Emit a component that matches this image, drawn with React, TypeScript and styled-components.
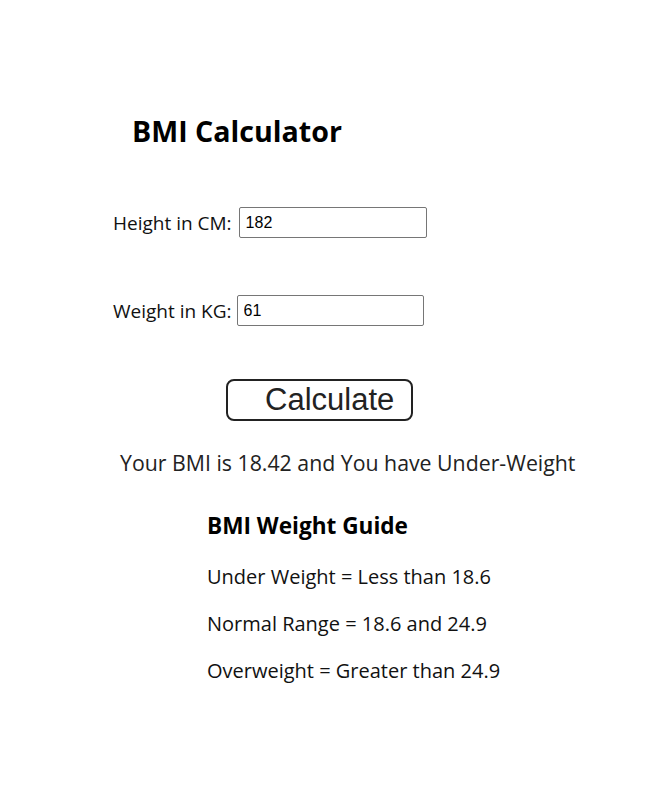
import React from "react";
import styled, { createGlobalStyle } from "styled-components";

const Global = createGlobalStyle`
  body { margin: 0; background: #fff; font-family: "Open Sans", "Noto Sans", sans-serif; color: #222; }
`;

const Page = styled.div`
  display: flex;
  flex-direction: column;
  align-items: flex-start;
  padding-top: 112px;
`;

const Title = styled.h1`
  margin: 0 0 0 132px;
  font-size: 28.6px;
  line-height: 38px;
  font-weight: 700;
  color: #000;
`;

const Field = styled.div<{ $top: number; $gap: number }>`
  display: flex;
  align-items: center;
  gap: ${(p) => p.$gap}px;
  margin: ${(p) => p.$top}px 0 0 113px;
  height: 31px;
`;

const Label = styled.label`
  font-size: 19px;
  color: #111;
`;

const Input = styled.input<{ $w: number }>`
  box-sizing: border-box;
  width: ${(p) => p.$w}px;
  height: 31px;
  border: 1px solid #767676;
  border-radius: 2px;
  padding: 1px 5px 1px 6px;
  font-family: "Liberation Sans", Arial, sans-serif;
  font-size: 16px;
  color: #000;
`;

const Button = styled.button`
  box-sizing: border-box;
  margin: 53px 0 0 226px;
  width: 187px;
  height: 42px;
  border: 2px solid #222;
  border-radius: 8px;
  background: #fff;
  padding: 0 0 0 37px;
  text-align: left;
  font-family: "Liberation Sans", Arial, sans-serif;
  font-size: 31px;
  line-height: 38px;
  color: #222;
`;

const Result = styled.p`
  margin: 28px 0 0 120px;
  font-size: 21.3px;
  line-height: 28px;
  color: #222;
`;

const Guide = styled.section`
  margin: 35px 0 0 207px;
  display: flex;
  flex-direction: column;
`;

const GuideTitle = styled.h3`
  margin: 0 0 4px;
  font-size: 22.6px;
  line-height: 28px;
  font-weight: 700;
  color: #000;
`;

const GuideItem = styled.p`
  margin: 19px 0 0;
  font-size: 20px;
  line-height: 28px;
  color: #111;
`;

export default function App() {
  return (
    <>
      <Global />
      <Page>
        <Title>BMI Calculator</Title>
        <Field $top={57} $gap={7}>
          <Label>Height in CM:</Label>
          <Input $w={188} defaultValue="182" />
        </Field>
        <Field $top={57} $gap={5}>
          <Label>Weight in KG:</Label>
          <Input $w={187} defaultValue="61" />
        </Field>
        <Button>Calculate</Button>
        <Result>Your BMI is 18.42 and You have Under-Weight</Result>
        <Guide>
          <GuideTitle>BMI Weight Guide</GuideTitle>
          <GuideItem>Under Weight = Less than 18.6</GuideItem>
          <GuideItem>Normal Range = 18.6 and 24.9</GuideItem>
          <GuideItem>Overweight = Greater than 24.9</GuideItem>
        </Guide>
      </Page>
    </>
  );
}
